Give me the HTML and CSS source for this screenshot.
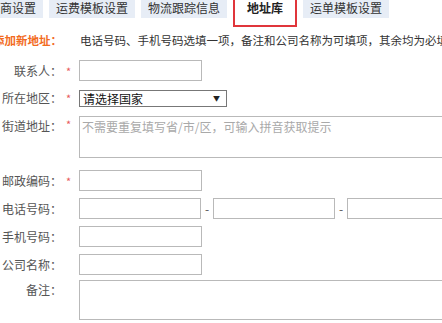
FILE: index.html
```html
<!DOCTYPE html>
<html lang="zh-CN">
<head>
  <meta charset="UTF-8">
  <title>地址库</title>
  <link rel="stylesheet" href="styles.css">
</head>
<body>

  <div class="tabs">
    <div class="tab tab-first">商设置</div>
    <div class="tab">运费模板设置</div>
    <div class="tab">物流跟踪信息</div>
    <div class="tab active">地址库</div>
    <div class="tab">运单模板设置</div>
  </div>

  <div class="form">
    <div class="row notice">
      <div class="label title">添加新地址：</div>
      <div class="req"></div>
      <div class="tip">电话号码、手机号码选填一项，备注和公司名称为可填项，其余均为必填</div>
    </div>

    <div class="row row-contact">
      <div class="label">联系人：</div>
      <div class="req">*</div>
      <input type="text" class="field">
    </div>

    <div class="row row-region">
      <div class="label">所在地区：</div>
      <div class="req">*</div>
      <div class="select-wrapper">
        <select class="country">
          <option>请选择国家</option>
        </select>
      </div>
    </div>

    <div class="row row-street top">
      <div class="label">街道地址：</div>
      <div class="req">*</div>
      <textarea class="area street" placeholder="不需要重复填写省/市/区，可输入拼音获取提示"></textarea>
    </div>

    <div class="row row-zip">
      <div class="label">邮政编码：</div>
      <div class="req">*</div>
      <input type="text" class="field">
    </div>

    <div class="row row-phone">
      <div class="label">电话号码：</div>
      <div class="req"></div>
      <div class="phone">
        <input type="text" class="field">
        <span class="dash">-</span>
        <input type="text" class="field">
        <span class="dash">-</span>
        <input type="text" class="field">
      </div>
    </div>

    <div class="row row-mobile">
      <div class="label">手机号码：</div>
      <div class="req"></div>
      <input type="text" class="field">
    </div>

    <div class="row row-company">
      <div class="label">公司名称：</div>
      <div class="req"></div>
      <input type="text" class="field">
    </div>

    <div class="row top">
      <div class="label">备注：</div>
      <div class="req"></div>
      <textarea class="area remark"></textarea>
    </div>
  </div>

</body>
</html>
```

FILE: styles.css
```css
body {
  margin: 0;
  width: 442px;
  height: 323px;
  overflow: hidden;
  background: #fff;
  color: #333;
  font-family: "Noto Sans CJK SC", "Microsoft YaHei", sans-serif;
  font-size: 12px;
}

.tabs {
  display: flex;
  align-items: flex-start;
  gap: 6px;
  height: 27px;
}

.tab {
  height: 18px;
  line-height: 16px;
  padding: 0 7px;
  background: #e7edf6;
  color: #333;
  white-space: nowrap;
}

.tab-first {
  padding-left: 0;
}

.tab.active {
  height: 27px;
  padding: 0 12px;
  background: #fff;
  border: 2px solid #e0353b;
  border-top: none;
  box-sizing: border-box;
  font-weight: bold;
  color: #222;
}

.form {
  padding-top: 6px;
}

.row {
  display: grid;
  grid-template-columns: 62px 17px 1fr;
  align-items: center;
  margin-bottom: 7px;
}

.row.top {
  align-items: start;
}

.label {
  display: flex;
  justify-content: flex-end;
  white-space: nowrap;
  color: #555;
  line-height: 20px;
}

.req {
  color: #e85a5c;
  padding-left: 4px;
  font-size: 11px;
  line-height: 16px;
}

.notice {
  margin-bottom: 13px;
  font-size: 11.5px;
}

.notice .label,
.notice .tip {
  line-height: 14px;
}

.title {
  color: #f26b1d;
  font-weight: bold;
}

.tip {
  padding-left: 1px;
  white-space: nowrap;
  color: #333;
}

.field {
  width: 123px;
  height: 21px;
  box-sizing: border-box;
  border: 1px solid #b9b9b9;
  margin: 0;
  padding: 0 4px;
  font: inherit;
}

.row-region {
  margin-bottom: 8px;
}

.select-wrapper {
  position: relative;
  width: 148px;
}

.country {
  width: 148px;
  height: 17px;
  box-sizing: border-box;
  border: 1px solid #777;
  border-radius: 0;
  margin: 0;
  padding: 0 0 0 3px;
  background: #fff;
  color: #111;
  font: inherit;
  line-height: 15px;
  -webkit-appearance: none;
  appearance: none;
}

.select-wrapper:after {
  content: "▼";
  position: absolute;
  right: 7px;
  top: 5px;
  font-size: 7px;
  line-height: 7px;
  color: #222;
}

.area {
  width: 400px;
  box-sizing: border-box;
  border: 1px solid #b9b9b9;
  margin: 0;
  padding: 3px 2px;
  font: inherit;
  line-height: 14px;
  resize: none;
}

.area::placeholder {
  color: #a9a9a9;
}

.street {
  height: 42px;
}

.row-street {
  margin-bottom: 12px;
}

.remark {
  height: 40px;
}

.phone {
  display: flex;
  align-items: center;
}

.phone .field {
  flex: none;
  width: 122px;
}

.dash {
  width: 12px;
  text-align: center;
  color: #555;
}

.row-company {
  margin-bottom: 5px;
}
```
